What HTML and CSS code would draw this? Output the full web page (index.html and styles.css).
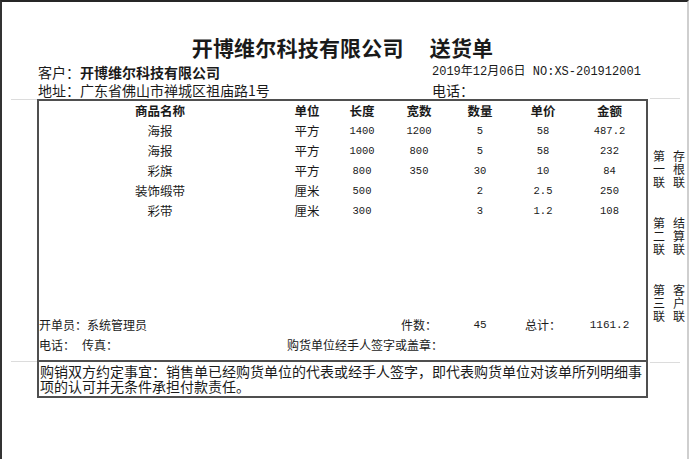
FILE: index.html
```html
<!DOCTYPE html>
<html lang="zh-CN">
<head>
<meta charset="utf-8">
<title>送货单</title>
<link rel="stylesheet" href="styles.css">
</head>
<body>
<div class="page">
  <h1 class="title">开博维尔科技有限公司<span class="gap"></span>送货单</h1>
  <div class="info">
    <div class="info-left">客户：<b>开博维尔科技有限公司</b></div>
    <div class="info-right mono">2019年12月06日 NO:XS-201912001</div>
    <div class="info-left">地址：广东省佛山市禅城区祖庙路1号</div>
    <div class="info-right">电话：</div>
  </div>
  <div class="body">
    <div class="main">
      <div class="box">
        <div class="grid head">
          <div>商品名称</div><div>单位</div><div>长度</div><div>宽数</div><div>数量</div><div>单价</div><div>金额</div>
        </div>
        <div class="grid">
          <div>海报</div><div>平方</div><div class="num">1400</div><div class="num">1200</div><div class="num">5</div><div class="num">58</div><div class="num">487.2</div>
        </div>
        <div class="grid">
          <div>海报</div><div>平方</div><div class="num">1000</div><div class="num">800</div><div class="num">5</div><div class="num">58</div><div class="num">232</div>
        </div>
        <div class="grid">
          <div>彩旗</div><div>平方</div><div class="num">800</div><div class="num">350</div><div class="num">30</div><div class="num">10</div><div class="num">84</div>
        </div>
        <div class="grid">
          <div>装饰缎带</div><div>厘米</div><div class="num">500</div><div class="num"></div><div class="num">2</div><div class="num">2.5</div><div class="num">250</div>
        </div>
        <div class="grid">
          <div>彩带</div><div>厘米</div><div class="num">300</div><div class="num"></div><div class="num">3</div><div class="num">1.2</div><div class="num">108</div>
        </div>
        <div class="spacer"></div>
        <div class="foot">
          <div class="grid">
            <div class="span-left">开单员：系统管理员</div>
            <div>件数：</div><div class="num">45</div><div>总计：</div><div class="num">1161.2</div>
          </div>
          <div class="grid">
            <div class="cell-left">电话：<span class="fax">传真：</span></div>
            <div class="span-right">购货单位经手人签字或盖章：</div>
          </div>
        </div>
      </div>
      <div class="notes">购销双方约定事宜：销售单已经购货单位的代表或经手人签字，即代表购货单位对该单所列明细事<br>项的认可并无条件承担付款责任。</div>
    </div>
    <div class="side">
      <div class="group"><div class="vt">第一联</div><div class="vt">存根联</div></div>
      <div class="group"><div class="vt">第二联</div><div class="vt">结算联</div></div>
      <div class="group"><div class="vt">第三联</div><div class="vt">客户联</div></div>
    </div>
  </div>
</div>
</body>
</html>
```

FILE: styles.css
```css
* { box-sizing: border-box; }
html, body { margin: 0; padding: 0; background: #fff; }
body {
  font-family: "Noto Sans CJK SC", "Noto Sans", sans-serif;
  color: #1a1a1a;
}
.page {
  width: 689px;
  height: 459px;
  border-top: 2px solid #262626;
  border-left: 2px solid #333;
  border-right: 2px solid #cfcfcf;
  padding-top: 33px;
  overflow: hidden;
}
.title {
  margin: 0 0 4px 0;
  font-size: 21px;
  line-height: 24px;
  font-weight: 700;
  text-align: center;
  padding-right: 4px;
  letter-spacing: 0.2px;
}
.gap { display: inline-block; width: 26px; }
.info {
  display: grid;
  grid-template-columns: 394px 1fr;
  padding-left: 36px;
  font-size: 14px;
  line-height: 18px;
  height: 36px;
}
.info b { font-weight: 700; }
.info-right { white-space: nowrap; }
.mono {
  font-family: "Liberation Mono", "Noto Sans CJK SC", monospace;
  font-size: 12px;
}
.body {
  display: flex;
  padding-left: 35px;
}
.main { width: 611px; }
.box {
  position: relative;
  height: 263px;
  border: 2px solid #4f4f4f;
  display: flex;
  flex-direction: column;
}
.box::before, .box::after {
  content: "";
  position: absolute;
  left: -28px;
  width: 26px;
  height: 1px;
  background: #dcdcdc;
}
.box::before { top: -2px; }
.box::after { bottom: -2px; }
.grid {
  display: grid;
  grid-template-columns: 242px 52px 58px 56px 66px 60px 73px;
  height: 20px;
  line-height: 20px;
  font-size: 12.5px;
  text-align: center;
  white-space: nowrap;
}
.head { font-weight: 700; }
.num {
  font-family: "Liberation Mono", monospace;
  font-size: 10.5px;
}
.spacer { flex: 1; }
.foot { padding-bottom: 5px; }
.foot .grid { font-size: 12px; }
.foot .num { font-size: 11px; }
.span-left { grid-column: 1 / 4; text-align: left; }
.cell-left { text-align: left; }
.fax { margin-left: 7px; }
.span-right { grid-column: 2 / 8; text-align: left; padding-left: 6px; }
.notes {
  height: 38px;
  margin-top: -2px;
  border: 2px solid #4f4f4f;
  padding: 2px 0 0 1px;
  font-size: 14px;
  line-height: 15px;
  white-space: nowrap;
  overflow: hidden;
}
.side {
  position: relative;
  width: 39px;
  padding-top: 50px;
  display: flex;
  flex-direction: column;
  gap: 28px;
}
.side::before, .side::after {
  content: "";
  position: absolute;
  left: 2px;
  width: 30px;
  height: 1px;
  background: #dcdcdc;
}
.side::before { top: -1px; }
.side::after { top: 263px; }
.group {
  display: flex;
  gap: 8px;
  padding-left: 5px;
}
.vt {
  width: 12px;
  font-size: 12px;
  line-height: 13px;
  word-break: break-all;
}
```
